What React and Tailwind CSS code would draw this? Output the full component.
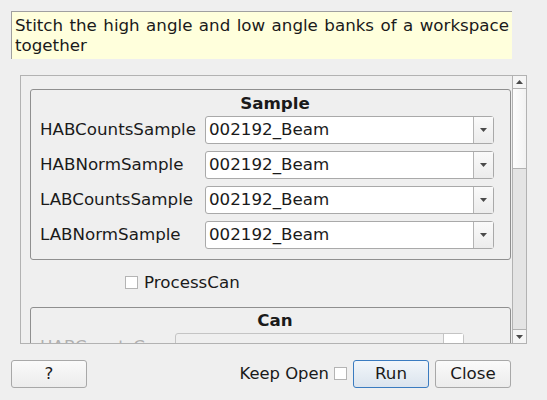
import React from 'react'

const FONT = { fontFamily: '"DejaVu Sans", "Liberation Sans", sans-serif' }

function Arrow({ up = false, className = '' }) {
  return (
    <svg width="7" height="4" viewBox="0 0 7 4" className={className}>
      {up
        ? <path d="M0 4 L3.5 0 L7 4 Z" fill="#4a4a4a" />
        : <path d="M0 0 L7 0 L3.5 4 Z" fill="#4a4a4a" />}
    </svg>
  )
}

function Combo({ value, disabled = false }) {
  return (
    <div
      className={`flex h-[28px] w-[289px] shrink-0 rounded-[3px] border ${disabled ? 'border-[#c4c4c4] bg-[#efefef]' : 'border-[#a9a9a9] bg-white'}`}
    >
      <div className="flex flex-1 items-center pl-[3px] text-[16.7px] text-[#1a1a1a]">{value}</div>
      <div className={`flex w-[20px] items-center justify-center border-l ${disabled ? 'border-[#c4c4c4] bg-white' : 'border-[#b4b4b4] bg-gradient-to-b from-[#fafafa] to-[#ececec]'}`}>
        {!disabled && <Arrow />}
      </div>
    </div>
  )
}

function Row({ label, value }) {
  return (
    <div className="flex h-[28px] items-center">
      <div className="w-[165px] shrink-0 text-[16.7px] text-[#1a1a1a]">{label}</div>
      <Combo value={value} />
    </div>
  )
}

function Button({ children, primary = false, className = '' }) {
  return (
    <div
      className={`flex h-[28px] w-[76px] items-center justify-center rounded-[3px] border text-[16.7px] text-[#1a1a1a] ${primary ? 'border-[#3a7bc0] bg-gradient-to-b from-[#f2f6fa] to-[#dbe4ee]' : 'border-[#a8a8a8] bg-gradient-to-b from-[#fafafa] to-[#ececec]'} ${className}`}
    >
      {children}
    </div>
  )
}

export default function App() {
  const rows = ['HABCountsSample', 'HABNormSample', 'LABCountsSample', 'LABNormSample']
  return (
    <div className="relative h-[400px] w-[547px] overflow-hidden bg-[#efefef]" style={FONT}>
      {/* description */}
      <div className="ml-[11px] mt-[11px] h-[48px] w-[501px] border-l border-t border-[#a0a0a0] bg-[#ffffdc] px-[3px] pt-[3px] text-justify text-[16.7px] leading-[20px] text-[#1a1a1a]">
        Stitch the high angle and low angle banks of a workspace together
      </div>

      {/* scroll area */}
      <div className="ml-[20px] mt-[16px] flex h-[269px] w-[507px] border border-[#b2b2b2]">
        <div className="flex-1 overflow-hidden pl-[9px] pr-[1px] pt-[13px]">
          <div className="rounded-[3px] border border-[#8f8f8f] pb-[10px] pl-[9px]">
            <div className="pt-[2px] text-center text-[16.7px] font-bold leading-[22px] text-[#1a1a1a]">Sample</div>
            <div className="mt-[2px] flex flex-col gap-[7px]">
              {rows.map(r => (
                <Row key={r} label={r} value="002192_Beam" />
              ))}
            </div>
          </div>

          <div className="mt-[16px] flex h-[13px] items-center">
            <div className="ml-[95px] h-[13px] w-[13px] border border-[#b4b4b4] bg-white" />
            <div className="ml-[6px] text-[16.7px] text-[#1a1a1a]">ProcessCan</div>
          </div>

          <div className="mt-[18px] rounded-[3px] border border-[#8f8f8f] pl-[9px]">
            <div className="pt-[1px] text-center text-[16.7px] font-bold leading-[22px] text-[#1a1a1a]">Can</div>
            <div className="mt-[2px] flex h-[28px] items-center">
              <div className="w-[135px] shrink-0 text-[16.7px] text-[#b0b0b0]">HABCountsCan</div>
              <Combo value="" disabled />
            </div>
          </div>
        </div>

        {/* scrollbar */}
        <div className="flex w-[14px] flex-col border-l border-[#b2b2b2] bg-[#e4e4e4]">
          <div className="flex h-[13px] items-center justify-center border-b border-[#b2b2b2] bg-[#f5f5f5]">
            <Arrow up />
          </div>
          <div className="h-[80px] border-b border-[#b2b2b2] bg-gradient-to-r from-[#fdfdfd] to-[#f2f2f2]" />
          <div className="flex-1" />
          <div className="flex h-[14px] items-center justify-center border-t border-[#b2b2b2] bg-[#f5f5f5]">
            <Arrow />
          </div>
        </div>
      </div>

      {/* bottom buttons */}
      <div className="mt-[16px] flex items-center pl-[11px]">
        <Button>?</Button>
        <div className="ml-auto flex items-center">
          <span className="text-[16.4px] text-[#1a1a1a]">Keep Open</span>
          <div className="ml-[5px] h-[13px] w-[13px] border border-[#b4b4b4] bg-white" />
        </div>
        <Button primary className="ml-[6px]">Run</Button>
        <Button className="ml-[6px] mr-[36px]">Close</Button>
      </div>
    </div>
  )
}
